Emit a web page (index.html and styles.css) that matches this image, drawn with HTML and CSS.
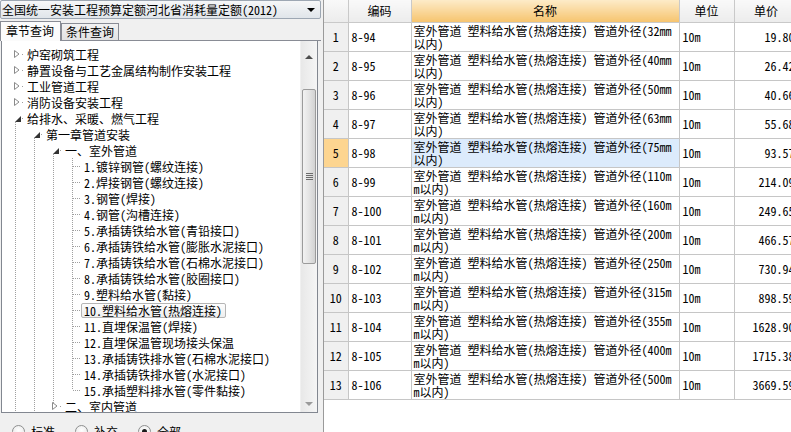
FILE: index.html
```html
<!DOCTYPE html>
<html lang="zh-CN">
<head>
<meta charset="utf-8">
<title>定额查询</title>
<link rel="stylesheet" href="styles.css">
</head>
<body>
<div class="app">
  <div class="left">
    <div class="combo"><span class="combo-text">全国统一安装工程预算定额河北省消耗量定额(2012)</span><span class="combo-arrow"></span></div>
    <div class="tabs">
      <div class="tab active">章节查询</div>
      <div class="tab">条件查询</div>
    </div>
    <div class="treebox">
      <div class="tree">
        <div class="row"><span class="c closed"><svg width="6" height="8" viewBox="0 0 6 8"><path d="M0.5 0.5 L5 4 L0.5 7.5 Z" fill="#fff" stroke="#8a8a8a"/></svg></span><span class="lbl">炉窑砌筑工程</span></div>
        <div class="row"><span class="c closed"><svg width="6" height="8" viewBox="0 0 6 8"><path d="M0.5 0.5 L5 4 L0.5 7.5 Z" fill="#fff" stroke="#8a8a8a"/></svg></span><span class="lbl">静置设备与工艺金属结构制作安装工程</span></div>
        <div class="row"><span class="c closed"><svg width="6" height="8" viewBox="0 0 6 8"><path d="M0.5 0.5 L5 4 L0.5 7.5 Z" fill="#fff" stroke="#8a8a8a"/></svg></span><span class="lbl">工业管道工程</span></div>
        <div class="row"><span class="c closed"><svg width="6" height="8" viewBox="0 0 6 8"><path d="M0.5 0.5 L5 4 L0.5 7.5 Z" fill="#fff" stroke="#8a8a8a"/></svg></span><span class="lbl">消防设备安装工程</span></div>
        <div class="row"><span class="c open"><svg width="6" height="6" viewBox="0 0 6 6"><path d="M6 0 L6 6 L0 6 Z" fill="#333"/></svg></span><span class="lbl">给排水、采暖、燃气工程</span></div>
        <div class="row"><span class="g v"></span><span class="c open"><svg width="6" height="6" viewBox="0 0 6 6"><path d="M6 0 L6 6 L0 6 Z" fill="#333"/></svg></span><span class="lbl">第一章管道安装</span></div>
        <div class="row"><span class="g v"></span><span class="g v"></span><span class="c open"><svg width="6" height="6" viewBox="0 0 6 6"><path d="M6 0 L6 6 L0 6 Z" fill="#333"/></svg></span><span class="lbl">一、室外管道</span></div>
        <div class="row"><span class="g v"></span><span class="g v"></span><span class="g v"></span><span class="c leaf"></span><span class="lbl">1.镀锌钢管(螺纹连接)</span></div>
        <div class="row"><span class="g v"></span><span class="g v"></span><span class="g v"></span><span class="c leaf"></span><span class="lbl">2.焊接钢管(螺纹连接)</span></div>
        <div class="row"><span class="g v"></span><span class="g v"></span><span class="g v"></span><span class="c leaf"></span><span class="lbl">3.钢管(焊接)</span></div>
        <div class="row"><span class="g v"></span><span class="g v"></span><span class="g v"></span><span class="c leaf"></span><span class="lbl">4.钢管(沟槽连接)</span></div>
        <div class="row"><span class="g v"></span><span class="g v"></span><span class="g v"></span><span class="c leaf"></span><span class="lbl">5.承插铸铁给水管(青铅接口)</span></div>
        <div class="row"><span class="g v"></span><span class="g v"></span><span class="g v"></span><span class="c leaf"></span><span class="lbl">6.承插铸铁给水管(膨胀水泥接口)</span></div>
        <div class="row"><span class="g v"></span><span class="g v"></span><span class="g v"></span><span class="c leaf"></span><span class="lbl">7.承插铸铁给水管(石棉水泥接口)</span></div>
        <div class="row"><span class="g v"></span><span class="g v"></span><span class="g v"></span><span class="c leaf"></span><span class="lbl">8.承插铸铁给水管(胶圈接口)</span></div>
        <div class="row"><span class="g v"></span><span class="g v"></span><span class="g v"></span><span class="c leaf"></span><span class="lbl">9.塑料给水管(黏接)</span></div>
        <div class="row"><span class="g v"></span><span class="g v"></span><span class="g v"></span><span class="c leaf"></span><span class="lbl sel">10.塑料给水管(热熔连接)</span></div>
        <div class="row"><span class="g v"></span><span class="g v"></span><span class="g v"></span><span class="c leaf"></span><span class="lbl">11.直埋保温管(焊接)</span></div>
        <div class="row"><span class="g v"></span><span class="g v"></span><span class="g v"></span><span class="c leaf"></span><span class="lbl">12.直埋保温管现场接头保温</span></div>
        <div class="row"><span class="g v"></span><span class="g v"></span><span class="g v"></span><span class="c leaf"></span><span class="lbl">13.承插铸铁排水管(石棉水泥接口)</span></div>
        <div class="row"><span class="g v"></span><span class="g v"></span><span class="g v"></span><span class="c leaf"></span><span class="lbl">14.承插铸铁排水管(水泥接口)</span></div>
        <div class="row"><span class="g v"></span><span class="g v"></span><span class="g v"></span><span class="c leaf last"></span><span class="lbl">15.承插塑料排水管(零件黏接)</span></div>
        <div class="row"><span class="g v"></span><span class="g v"></span><span class="c closed tail"><svg width="6" height="8" viewBox="0 0 6 8"><path d="M0.5 0.5 L5 4 L0.5 7.5 Z" fill="#fff" stroke="#8a8a8a"/></svg></span><span class="lbl">二、室内管道</span></div>
        <div class="row"><span class="g v"></span><span class="g v"></span></div>
      </div>
      <div class="vscroll">
        <div class="sbtn up"><span class="arr-up"></span></div>
        <div class="track">
          <div class="thumb"><span class="grip"></span></div>
        </div>
        <div class="sbtn down"><span class="arr-down"></span></div>
      </div>
    </div>
    <div class="radios">
      <div class="radio"><span class="circle"></span>标准</div>
      <div class="radio"><span class="circle"></span>补充</div>
      <div class="radio"><span class="circle on"></span>全部</div>
    </div>
  </div>
  <div class="splitter"></div>
  <div class="grid">
    <table class="tbl">
      <colgroup>
        <col class="w-no"><col class="w-code"><col class="w-name"><col class="w-unit"><col class="w-price">
      </colgroup>
      <thead>
        <tr><th></th><th>编码</th><th class="sorted">名称</th><th>单位</th><th>单价</th></tr>
      </thead>
      <tbody>
        <tr><td class="no">1</td><td class="code">8-94</td><td class="name">室外管道 塑料给水管(热熔连接) 管道外径(32mm<br>以内)</td><td class="unit">10m</td><td class="price">19.80</td></tr>
        <tr><td class="no">2</td><td class="code">8-95</td><td class="name">室外管道 塑料给水管(热熔连接) 管道外径(40mm<br>以内)</td><td class="unit">10m</td><td class="price">26.42</td></tr>
        <tr><td class="no">3</td><td class="code">8-96</td><td class="name">室外管道 塑料给水管(热熔连接) 管道外径(50mm<br>以内)</td><td class="unit">10m</td><td class="price">40.66</td></tr>
        <tr><td class="no">4</td><td class="code">8-97</td><td class="name">室外管道 塑料给水管(热熔连接) 管道外径(63mm<br>以内)</td><td class="unit">10m</td><td class="price">55.68</td></tr>
        <tr class="current"><td class="no">5</td><td class="code">8-98</td><td class="name">室外管道 塑料给水管(热熔连接) 管道外径(75mm<br>以内)</td><td class="unit">10m</td><td class="price">93.57</td></tr>
        <tr><td class="no">6</td><td class="code">8-99</td><td class="name">室外管道 塑料给水管(热熔连接) 管道外径(110m<br>m以内)</td><td class="unit">10m</td><td class="price">214.09</td></tr>
        <tr><td class="no">7</td><td class="code">8-100</td><td class="name">室外管道 塑料给水管(热熔连接) 管道外径(160m<br>m以内)</td><td class="unit">10m</td><td class="price">249.65</td></tr>
        <tr><td class="no">8</td><td class="code">8-101</td><td class="name">室外管道 塑料给水管(热熔连接) 管道外径(200m<br>m以内)</td><td class="unit">10m</td><td class="price">466.57</td></tr>
        <tr><td class="no">9</td><td class="code">8-102</td><td class="name">室外管道 塑料给水管(热熔连接) 管道外径(250m<br>m以内)</td><td class="unit">10m</td><td class="price">730.94</td></tr>
        <tr><td class="no">10</td><td class="code">8-103</td><td class="name">室外管道 塑料给水管(热熔连接) 管道外径(315m<br>m以内)</td><td class="unit">10m</td><td class="price">898.59</td></tr>
        <tr><td class="no">11</td><td class="code">8-104</td><td class="name">室外管道 塑料给水管(热熔连接) 管道外径(355m<br>m以内)</td><td class="unit">10m</td><td class="price">1628.90</td></tr>
        <tr><td class="no">12</td><td class="code">8-105</td><td class="name">室外管道 塑料给水管(热熔连接) 管道外径(400m<br>m以内)</td><td class="unit">10m</td><td class="price">1715.38</td></tr>
        <tr><td class="no">13</td><td class="code">8-106</td><td class="name">室外管道 塑料给水管(热熔连接) 管道外径(500m<br>m以内)</td><td class="unit">10m</td><td class="price">3669.59</td></tr>
      </tbody>
    </table>
  </div>
</div>
</body>
</html>
```
FILE: styles.css
```css
* { box-sizing: border-box; }
html, body { margin: 0; padding: 0; }
body {
  width: 791px;
  height: 432px;
  overflow: hidden;
  background: #f0f0f0;
  color: #000;
  font-family: "Noto Sans Mono CJK SC", "Noto Sans CJK SC", sans-serif;
  font-size: 12px;
}
.app { display: flex; height: 432px; }

/* ---------- left panel ---------- */
.left { width: 321px; flex: none; display: flex; flex-direction: column; overflow: hidden; }
.left > * { flex: none; }
.combo {
  height: 19px;
  border: 1px solid #9da7b3;
  border-radius: 2px;
  background: linear-gradient(#f6f7f8, #e0e5ea);
  display: flex;
  align-items: center;
  padding-left: 1px;
  line-height: 14px;
  white-space: nowrap;
}
.combo-arrow {
  margin-left: auto;
  margin-right: 5px;
  width: 0; height: 0;
  border-left: 4px solid transparent;
  border-right: 4px solid transparent;
  border-top: 4px solid #000;
}
.tabs {
  height: 22px;
  display: flex;
  align-items: flex-end;
  border-bottom: 1px solid #898c95;
}
.tab {
  height: 17px;
  line-height: 15px;
  padding: 0 4px;
  border: 1px solid #898c95;
  border-bottom: none;
  background: linear-gradient(#f2f2f2, #e2e2e2);
  white-space: nowrap;
}
.tab.active {
  height: 20px;
  line-height: 17px;
  margin-bottom: -1px;
  padding: 0 5px;
  background: #fbfbfb;
  width: 61px;
}
.treebox {
  height: 372px;
  margin-left: 1px;
  width: 317px;
  border: 1px solid #828790;
  border-top: none;
  background: #fff;
  display: flex;
}
.tree { flex: 1; padding: 5px 0 0 3px; overflow: hidden; }
.row { display: flex; align-items: center; height: 16px; flex: none; }
.g, .c { width: 19px; height: 16px; flex: none; position: relative; }
.g.v::before, .c.leaf::before, .c.open::after, .c.tail::after {
  content: "";
  position: absolute;
  left: 10px;
  width: 1px;
  background: repeating-linear-gradient(to bottom, #a0a0a0 0 1px, transparent 1px 2px);
}
.g.v::before { top: 0; bottom: 0; }
.c.leaf::before { top: 0; bottom: 0; }
.c.leaf.last::before { bottom: 8px; }
.c.leaf::after {
  content: "";
  position: absolute;
  left: 11px; right: 0; top: 8px;
  height: 1px;
  background: repeating-linear-gradient(to right, #a0a0a0 0 1px, transparent 1px 2px);
}
.c.open::after { top: 12px; bottom: 0; }
.c.tail::after { top: 0; height: 6px; }
.c.closed svg { display: block; margin: 4px 0 0 9px; }
.c.open svg { display: block; margin: 6px 0 0 10px; }
.c.closed::before, .c.open::before {
  content: "";
  position: absolute;
  left: 17px; top: 8px;
  width: 1px; height: 1px;
  background: #a0a0a0;
}
.lbl {
  height: 15px;
  line-height: 13px;
  padding: 0 3px 0 2px;
  border: 1px solid transparent;
  border-radius: 2px;
  white-space: nowrap;
}
.lbl.sel {
  border-color: #b5b5b5;
  background: linear-gradient(#fdfdfd, #eeeeee);
}

/* scrollbar */
.vscroll {
  width: 17px;
  flex: none;
  display: flex;
  flex-direction: column;
  background: linear-gradient(to right, #e8e8e8, #f5f5f5);
  border-left: 1px solid #f0f0f0;
}
.sbtn { height: 17px; display: flex; align-items: center; justify-content: center; flex: none; }
.sbtn.up { margin-top: 7px; }
.arr-up { width: 0; height: 0; border-left: 4px solid transparent; border-right: 4px solid transparent; border-bottom: 4px solid #4e4e4e; }
.arr-down { width: 0; height: 0; border-left: 4px solid transparent; border-right: 4px solid transparent; border-top: 4px solid #9a9a9a; }
.track { flex: 1; padding: 24px 1px 0 1px; }
.thumb {
  height: 175px;
  border: 1px solid #9b9b9b;
  border-radius: 2px;
  background: linear-gradient(to right, #f2f2f2, #e4e4e4 50%, #d2d2d2);
  display: flex;
  align-items: center;
  justify-content: center;
}
.grip {
  width: 7px; height: 7px;
  background: repeating-linear-gradient(to bottom, #6c6c6c 0 1px, transparent 1px 2px);
}

/* radios */
.radios { display: flex; align-items: flex-start; padding: 12px 0 0 12px; gap: 20px; line-height: 13px; }
.radio { display: flex; align-items: flex-start; white-space: nowrap; }
.circle {
  width: 13px; height: 13px;
  border: 1px solid #8e8f8f;
  border-radius: 50%;
  background: radial-gradient(circle at 50% 40%, #fff, #e4e4e4);
  margin-right: 6px;
  display: flex; align-items: center; justify-content: center;
}
.circle.on::after { content: ""; width: 5px; height: 5px; border-radius: 50%; background: #1a1a1a; }

.splitter { width: 2px; flex: none; background: #f0f0f0; }

/* ---------- grid ---------- */
.grid {
  flex: 1;
  overflow: hidden;
  background: #fff;
  border-left: 1px solid #9a9a9a;
}
.tbl {
  border-collapse: collapse;
  table-layout: fixed;
  width: 474px;
}
.w-no { width: 24px; }
.w-code { width: 63px; }
.w-name { width: 268px; }
.w-unit { width: 55px; }
.w-price { width: 64px; }
.tbl th {
  height: 22px;
  padding: 0;
  font-weight: normal;
  text-align: center;
  background: linear-gradient(#f9f9f9, #ececec);
  border: 1px solid #c9c9c9;
  border-top: none;
  white-space: nowrap;
}
.tbl th:first-child { border-left: none; }
.tbl th.sorted { background: linear-gradient(#fdebc8, #f6c46f); }
.tbl td {
  height: 29px;
  padding: 0 3px;
  border: 1px solid #c6c6c6;
  white-space: nowrap;
  overflow: hidden;
  vertical-align: middle;
}
.tbl td.no { background: #f0f0f0; text-align: center; padding: 0; border-left: none; }
.tbl td.name { line-height: 13px; padding: 0 2px; }
.tbl td.price { text-align: right; }
.tbl tr.current td.no { background: #fdd590; }
.tbl tr.current td.name { background: #dcebfc; }
```
